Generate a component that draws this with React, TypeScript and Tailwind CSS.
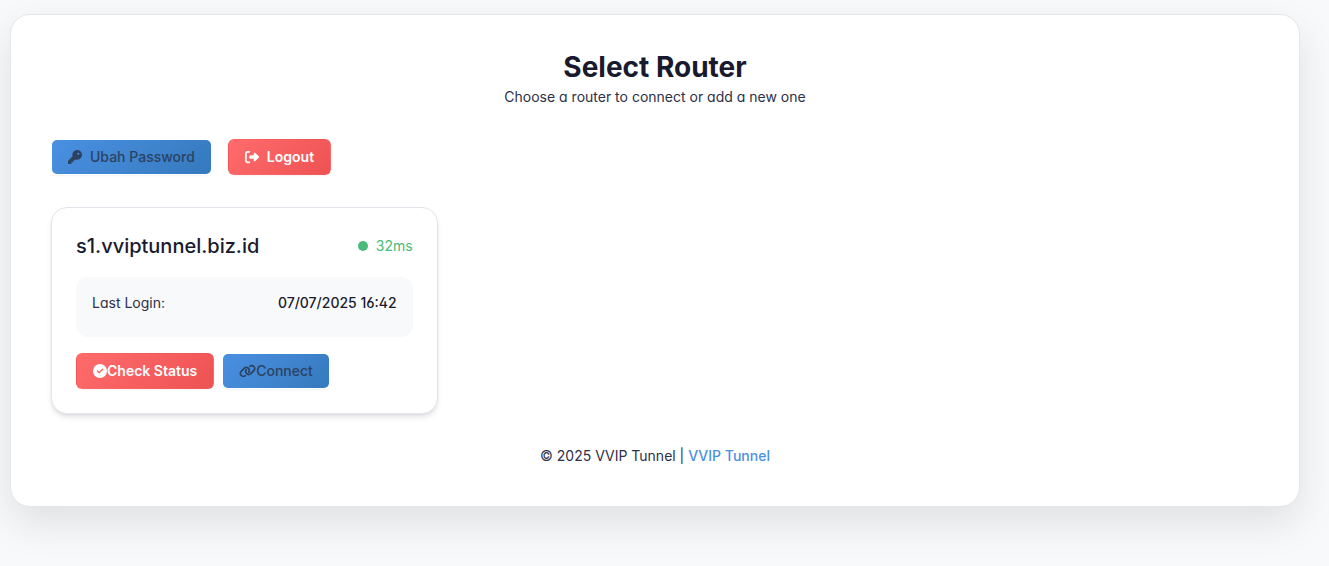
import React from 'react';
import { FaCircleCheck, FaKey, FaLink, FaRightFromBracket } from 'react-icons/fa6';

const btn = 'flex h-9 items-center rounded-md border px-4 text-sm [font-feature-settings:normal]';
const danger = 'border-transparent bg-linear-135 from-[#ff6b6b] to-[#ee5253] bg-origin-padding font-semibold text-white shadow-xs';
const primary = 'border-transparent bg-linear-135 from-[#4a90e2] to-[#357abd] bg-clip-padding font-medium text-[#2c4260] shadow-xs';

const routers = [
  { host: 's1.vviptunnel.biz.id', ping: '32ms', lastLogin: '07/07/2025 16:42' },
];

const App = () => {
  return (
    <div className="min-h-screen bg-[#f8f9fb] pt-3.5 pr-[29px] pb-14 pl-2.5 font-['Inter',sans-serif] text-sm text-[#2d3047] [font-feature-settings:'cv02','cv03','cv04','cv11']">
      <main className="rounded-[20px] border border-[#e4e6ea] bg-white px-10 pt-[34px] pb-10 shadow-[0_16px_40px_rgba(0,0,0,0.1)]">
        {/* Header */}
        <header className="mb-[30px] text-center">
          <h1 className="text-[28px] leading-9 font-bold text-[#1a1a2e]">Select Router</h1>
          <p className="leading-6">Choose a router to connect or add a new one</p>
        </header>

        {/* Account actions */}
        <div className="mb-8 flex gap-4">
          <button type="button" className={`${btn} ${primary} gap-2`}>
            <FaKey className="h-3.5 w-3.5" />
            Ubah Password
          </button>
          <button type="button" className={`${btn} ${danger} gap-2`}>
            <FaRightFromBracket className="h-3.5 w-3.5" />
            Logout
          </button>
        </div>

        {/* Routers */}
        <div className="grid grid-cols-1 gap-6 sm:grid-cols-2 lg:grid-cols-[repeat(auto-fill,minmax(350px,1fr))]">
          {routers.map((router) => (
            <section key={router.host} className="rounded-2xl border border-[#e2e6ec] bg-white p-6 shadow-md">
              <div className="mb-[17px] flex items-center justify-between">
                <h2 className="text-xl leading-7 font-medium text-[#1a1a2e]">{router.host}</h2>
                <span className="flex items-center gap-2 text-[#48bb78]">
                  <span className="h-2.5 w-2.5 rounded-full bg-[#48bb78]" />
                  {router.ping}
                </span>
              </div>
              <div className="mb-4 rounded-xl bg-[#f8f9fb] px-4 pt-4 pb-6">
                <div className="flex justify-between leading-5">
                  <span>Last Login:</span>
                  <span className="font-medium text-[#1a1a2e]">{router.lastLogin}</span>
                </div>
              </div>
              <div className="flex gap-2">
                <button type="button" className={`${btn} ${danger}`}>
                  <FaCircleCheck className="h-3.5 w-3.5" />
                  Check Status
                </button>
                <button type="button" className={`${btn} ${primary}`}>
                  <FaLink className="h-3.5 w-[17px]" />
                  Connect
                </button>
              </div>
            </section>
          ))}
        </div>

        <footer className="mt-8 text-center leading-5">
          © 2025 VVIP Tunnel |{' '}
          <a href="#" className="font-medium text-[#4a90e2]">VVIP Tunnel</a>
        </footer>
      </main>
    </div>
  );
};

export default App;
